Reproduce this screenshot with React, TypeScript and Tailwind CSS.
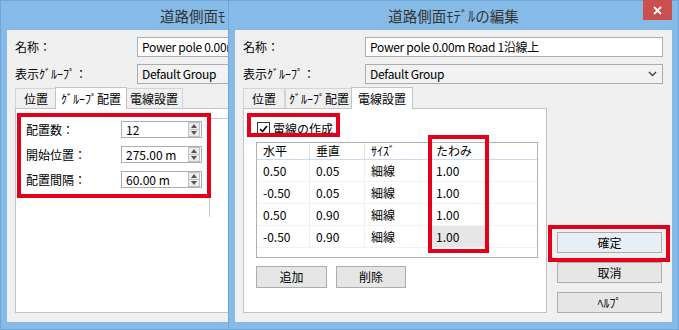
import React from "react";

const FONT = "font-['Noto_Sans_CJK_JP','Noto_Sans',sans-serif]";

function CloseX() {
  return (
    <svg width="9" height="9" viewBox="0 0 9 9">
      <path d="M1 1 L8 8 M8 1 L1 8" stroke="#fff" strokeWidth="1.8" />
    </svg>
  );
}

function Chevron() {
  return (
    <svg width="9" height="6" viewBox="0 0 9 6">
      <path d="M1 1 L4.5 4.5 L8 1" stroke="#444" strokeWidth="1.4" fill="none" />
    </svg>
  );
}

function Spinner() {
  return (
    <div className="ml-auto mr-[1px] w-[12px] h-[15px] flex flex-col border border-[#c2c2c2] bg-[#ececec]">
      <div className="flex-1 flex items-center justify-center border-b border-[#c2c2c2]">
        <svg width="6" height="4" viewBox="0 0 6 4">
          <path d="M0 4 L3 0 L6 4 Z" fill="#555" />
        </svg>
      </div>
      <div className="flex-1 flex items-center justify-center">
        <svg width="6" height="4" viewBox="0 0 6 4">
          <path d="M0 0 L3 4 L6 0 Z" fill="#555" />
        </svg>
      </div>
    </div>
  );
}

function Btn({ label, className }: { label: string; className: string }) {
  return (
    <div
      className={`h-[21px] flex items-center justify-center border border-[#adadad] bg-[#e6e6e6] text-[12px] text-black ${className}`}
    >
      {label}
    </div>
  );
}

const TABS = [
  { label: "位置", w: "w-[42px]", wa: "w-[46px]" },
  { label: "ｸﾞﾙｰﾌﾟ配置", w: "w-[68px]", wa: "w-[72px]" },
  { label: "電線設置", w: "w-[58px]", wa: "w-[62px]" },
];

function Tabs({ active }: { active: number }) {
  return (
    <div className="flex h-[21px] items-end">
      {TABS.map((t, i) =>
        i === active ? (
          <div
            key={t.label}
            className={`${t.wa} -mx-[2px] h-[22px] mb-[-1px] relative z-10 bg-white border border-b-0 border-[#c4c4c4] flex items-center justify-center text-[12px]`}
          >
            {t.label}
          </div>
        ) : (
          <div
            key={t.label}
            className={`${t.w} h-[20px] bg-[#f0f0f0] border border-b-0 border-[#d4d4d4] flex items-center justify-center text-[12px]`}
          >
            {t.label}
          </div>
        )
      )}
    </div>
  );
}

const ROWS = [
  ["0.50", "0.05", "細線", "1.00"],
  ["-0.50", "0.05", "細線", "1.00"],
  ["0.50", "0.90", "細線", "1.00"],
  ["-0.50", "0.90", "細線", "1.00"],
];

const COLS = ["w-[53px]", "w-[55px]", "w-[65px]", "w-[58px]"];

function WirePanel() {
  return (
    <div className="relative w-[304px] h-[205px] bg-white border border-[#c4c4c4] pl-[12px] pt-[13px]">
      <div className="flex items-center h-[13px] ml-[1px]">
        <div className="w-[13px] h-[13px] border border-[#333] bg-white flex items-center justify-center">
          <svg width="9" height="8" viewBox="0 0 9 8">
            <path d="M1 4 L3.5 6.5 L8 1" stroke="#000" strokeWidth="1.6" fill="none" />
          </svg>
        </div>
        <span className="ml-[3px] text-[12px]">電線の作成</span>
      </div>
      <div className="mt-[7px] w-[282px] h-[116px] border border-[#b0b0b0] bg-white flex flex-col">
        <div className="flex h-[17px] border-b border-[#c9dbec] text-[12px]">
          {["水平", "垂直", "ｻｲｽﾞ", "たわみ"].map((h, i) => (
            <div key={h} className={`${COLS[i]} border-r border-[#e4e4e4] pl-[6px] flex items-center`}>
              {h}
            </div>
          ))}
        </div>
        {ROWS.map((r, ri) => (
          <div key={ri} className="flex h-[22px] border-b border-[#f2f2f2] text-[12px]">
            {r.map((c, ci) => (
              <div
                key={ci}
                className={`${COLS[ci]} border-r border-[#efefef] pl-[6px] flex items-center ${
                  ri === 3 && ci === 3 ? "bg-[#e6e6e6]" : ""
                }`}
              >
                {c}
              </div>
            ))}
          </div>
        ))}
      </div>
      <div className="flex mt-[8px] gap-[9px]">
        <Btn label="追加" className="w-[71px] h-[22px]" />
        <Btn label="削除" className="w-[70px] h-[22px]" />
      </div>
      <div className="absolute left-[3px] top-[4px] w-[93px] h-[24px] border-[4px] border-[#e3001b]" />
      <div className="absolute left-[184px] top-[26px] w-[61px] h-[118px] border-[4px] border-[#e3001b]" />
    </div>
  );
}

function GroupPanel() {
  const rows = [
    ["配置数：", "12"],
    ["開始位置：", "275.00 m"],
    ["配置間隔：", "60.00 m"],
  ];
  return (
    <div className="relative w-[304px] h-[205px] bg-white border border-[#c4c4c4] pl-[10px] pt-[12px]">
      <div className="flex flex-col gap-[8px]">
        {rows.map(([l, v]) => (
          <div key={l} className="flex items-center h-[17px]">
            <span className="w-[95px] text-[12px]">{l}</span>
            <div className="w-[81px] h-[17px] border border-[#abadb3] bg-white flex items-center pl-[4px] text-[12px]">
              {v}
              <Spinner />
            </div>
          </div>
        ))}
      </div>
      <div className="absolute left-[193px] top-[9px] w-[1px] h-[99px] bg-[#c8c8c8]" />
      <div className="absolute left-[194px] top-[9px] w-[40px] h-[1px] bg-[#c8c8c8]" />
      <div className="absolute left-[1px] top-[4px] w-[194px] h-[85px] border-[4px] border-[#e3001b]" />
    </div>
  );
}

function Dialog({
  active,
  highlightOk,
  full,
  nameText,
}: {
  active: number;
  highlightOk: boolean;
  full: boolean;
  nameText: string;
}) {
  return (
    <div className="w-[451px] h-[330px] bg-[#86bbe8] border border-[#6ea6dc] flex flex-col">
      <div className="relative h-[29px] flex items-center justify-center text-[14.5px] text-[#333]">
        {full ? "道路側面ﾓﾃﾞﾙの編集" : ""}
        {!full && <span className="absolute left-[159px] whitespace-nowrap">道路側面ﾓ</span>}
        {full && (
          <div className="absolute right-[6px] top-[-1px] w-[29px] h-[20px] bg-[#c9504c] flex items-center justify-center">
            <CloseX />
          </div>
        )}
      </div>
      <div className="mx-[6px] mb-[7px] flex-1 bg-[#f0f0f0] px-[8px] pt-[7px] text-black">
        <div className="flex items-center h-[20px]">
          <span className="w-[122px] text-[12px]">名称：</span>
          <div className="w-[298px] h-[20px] border border-[#abadb3] bg-white px-[4px] flex items-center text-[12px] tracking-[-0.3px] whitespace-nowrap overflow-hidden">
            {nameText}
          </div>
        </div>
        <div className="flex items-center h-[20px] mt-[7px]">
          <span className="w-[122px] text-[12px]">表示ｸﾞﾙｰﾌﾟ：</span>
          <div className="w-[298px] h-[20px] border border-[#acacac] bg-[#f2f2f2] pl-[4px] pr-[5px] flex items-center justify-between text-[12px] tracking-[-0.3px]">
            Default Group
            <Chevron />
          </div>
        </div>
        <div className="mt-[3px]">
          <Tabs active={active} />
        </div>
        <div className="flex items-end">
          {active === 2 ? <WirePanel /> : <GroupPanel />}
          {full && (
            <div className="ml-[10px] w-[105px] flex flex-col gap-[9px]">
              <div className="relative">
                <Btn label="確定" className="w-[105px] border-[#5a9bd8] bg-[#e7eef6]" />
                {highlightOk && (
                  <div className="absolute left-[-9px] top-[-7px] w-[122px] h-[37px] border-[4px] border-[#e3001b]" />
                )}
              </div>
              <Btn label="取消" className="w-[105px]" />
              <Btn label="ﾍﾙﾌﾟ" className="w-[105px]" />
            </div>
          )}
        </div>
      </div>
    </div>
  );
}

export default function App() {
  return (
    <div className={`relative w-[679px] h-[330px] overflow-hidden bg-white ${FONT}`}>
      <div className="absolute left-0 top-0 w-[229px] h-[330px] overflow-hidden">
        <Dialog active={1} highlightOk={false} full={false} nameText="Power pole 0.00m" />
      </div>
      <div className="absolute left-[228px] top-0">
        <Dialog active={2} highlightOk={true} full={true} nameText="Power pole 0.00m Road 1沿線上" />
      </div>
    </div>
  );
}
